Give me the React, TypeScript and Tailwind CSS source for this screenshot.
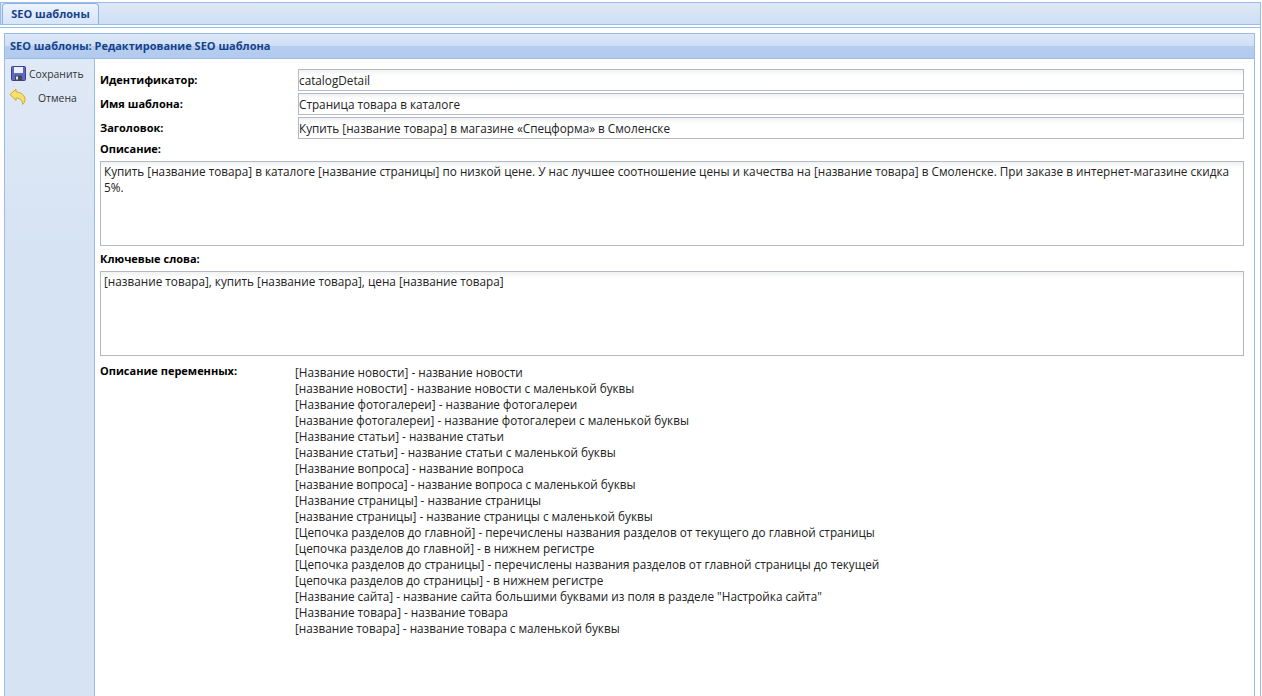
const vars = [
  '[Название новости] - название новости',
  '[название новости] - название новости с маленькой буквы',
  '[Название фотогалереи] - название фотогалереи',
  '[название фотогалереи] - название фотогалереи с маленькой буквы',
  '[Название статьи] - название статьи',
  '[название статьи] - название статьи с маленькой буквы',
  '[Название вопроса] - название вопроса',
  '[название вопроса] - название вопроса с маленькой буквы',
  '[Название страницы] - название страницы',
  '[название страницы] - название страницы с маленькой буквы',
  '[Цепочка разделов до главной] - перечислены названия разделов от текущего до главной страницы',
  '[цепочка разделов до главной] - в нижнем регистре',
  '[Цепочка разделов до страницы] - перечислены названия разделов от главной страницы до текущей',
  '[цепочка разделов до страницы] - в нижнем регистре',
  '[Название сайта] - название сайта большими буквами из поля в разделе "Настройка сайта"',
  '[Название товара] - название товара',
  '[название товара] - название товара с маленькой буквы',
];

function Field({ label, value }: { label: string; value: string }) {
  return (
    <div className="flex h-[24px] items-center">
      <div className="w-[198px] shrink-0 text-[11px] font-bold text-black">{label}</div>
      <div className="flex h-[22px] flex-1 items-center border border-[#b5b8c8] bg-gradient-to-b from-[#f0f3f1] to-white to-[30%] pt-[1px] text-[#222]">{value}</div>
    </div>
  );
}

function Area({ label, value, h }: { label: string; value: string; h: string }) {
  return (
    <div>
      <div className="text-[11px] leading-[16px] font-bold text-black">{label}</div>
      <div className={`mt-[4px] border border-[#b5b8c8] bg-gradient-to-b from-[#f0f3f1] to-white to-[8%] px-[3px] pt-[1px] leading-[16px] text-[#222] ${h}`}>{value}</div>
    </div>
  );
}

export default function App() {
  return (
    <div className="h-[696px] w-[1262px] overflow-hidden bg-white pt-[2px] pr-[1px] font-['Open_Sans','Noto_Sans',sans-serif] text-[11.75px] text-[#222]">
      <div className="relative flex h-[23px] items-end border border-[#99bbe8] bg-gradient-to-b from-[#dfe8f6] to-[#cedff5]">
        <div className="ml-[1px] flex h-[21px] w-[97px] items-center justify-center rounded-t-[4px] border border-b-0 border-[#8db2e3] bg-gradient-to-b from-[#ebf3fd] to-[#d6e5f8] text-[11px] font-bold text-[#15428b]">SEO шаблоны</div>
      </div>
      <div className="h-[672px] border-r border-[#99bbe8]">
        <div className="h-[3px] border-b border-[#99bbe8]"></div>
        <div className="mt-[5px] mr-[5px] ml-[4px] flex h-[700px] flex-col border-l border-[#99bbe8] border-r">
          <div className="flex h-[26px] items-center border-t border-b border-[#99bbe8] bg-[linear-gradient(to_bottom,#dde8f7_0%,#cfdff4_48%,#b6cdef_52%,#b2caee_100%)] pl-[5px] pt-[1px] text-[11px] font-bold text-[#15428b]">SEO шаблоны: Редактирование SEO шаблона</div>
          <div className="flex flex-1">
            <div className="w-[90px] shrink-0 border-r border-[#99bbe8] bg-gradient-to-b from-[#e0e9f6] to-[#d6e3f3] to-[30%] pt-[5px] text-[10.4px]">
              <div className="flex h-[20px] items-center pl-[6px]">
                <svg width="15" height="15" viewBox="0 0 15 15" className="-mt-[2px] shrink-0">
                  <rect x="0.5" y="0.5" width="14" height="14" rx="1" fill="#5f68c4" stroke="#3a3f96" />
                  <rect x="3" y="1" width="9" height="6" fill="#eef0fa" />
                  <rect x="4" y="9.5" width="7" height="5" fill="#444a55" />
                  <rect x="5" y="10.5" width="2" height="3" fill="#dfe2ef" />
                </svg>
                <span className="ml-[3px] pt-[1px] text-[#333]">Сохранить</span>
              </div>
              <div className="mt-[4px] flex h-[20px] items-center pl-[4px]">
                <svg width="17" height="17" viewBox="0 0 17 17" className="-mt-[3px] shrink-0">
                  <path d="M1 6.5 7 1V4C12 4 16 7.5 16 11.5 16 13.5 15 15.5 13.5 16.5 13.8 13 11.5 10 7 10V12.5Z" fill="#f7df6e" stroke="#d0a92c" strokeWidth="1" strokeLinejoin="round" />
                </svg>
                <span className="ml-[12px] pt-[1px] text-[#333]">Отмена</span>
              </div>
            </div>
            <div className="flex-1 pt-[9px] pr-[10px] pl-[5px]">
              <Field label="Идентификатор:" value="catalogDetail" />
              <Field label="Имя шаблона:" value="Страница товара в каталоге" />
              <Field label="Заголовок:" value="Купить [название товара] в магазине «Спецформа» в Смоленске" />
              <div className="mt-[1px]">
                <Area label="Описание:" h="h-[85px]" value="Купить [название товара] в каталоге [название страницы] по низкой цене. У нас лучшее соотношение цены и качества на [название товара] в Смоленске. При заказе в интернет-магазине скидка 5%." />
              </div>
              <div className="mt-[5px]">
                <Area label="Ключевые слова:" h="h-[85px]" value="[название товара], купить [название товара], цена [название товара]" />
              </div>
              <div className="mt-[7px] flex">
                <div className="w-[196px] shrink-0 text-[11px] leading-[16px] font-bold text-black">Описание переменных:</div>
                <div className="-ml-[1px] pt-[1px] leading-[16px]">
                  {vars.map((v) => (
                    <div key={v}>{v}</div>
                  ))}
                </div>
              </div>
            </div>
          </div>
        </div>
      </div>
    </div>
  );
}
